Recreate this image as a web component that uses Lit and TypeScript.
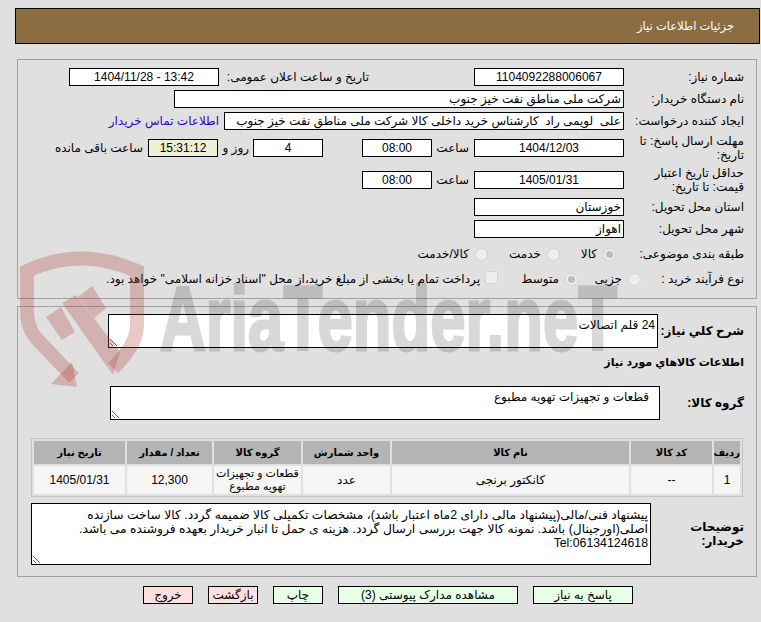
import { LitElement, html, css } from "lit";
import { customElement } from "lit/decorators.js";

const ROWS = [
  { n: "1", code: "--", name: "کانکتور برنجی", unit: "عدد", group: "قطعات و تجهیزات تهویه مطبوع", qty: "12,300", date: "1405/01/31" },
];

@customElement("app-root")
export class AppRoot extends LitElement {
  static styles = css`
    :host {
      display: block;
      position: relative;
      width: 761px;
      height: 622px;
      overflow: hidden;
      background: #e0e0e0;
      font-family: "Liberation Sans", "DejaVu Sans", sans-serif;
      font-size: 12px;
      line-height: 14px;
      color: #000;
      direction: rtl;
    }
    * { box-sizing: border-box; }
    .header {
      margin: 8px 1px 0 15px;
      height: 36px;
      background: #8c6d42;
      border: 1px solid #000;
      color: #fff;
      font-size: 11.5px;
      display: flex;
      align-items: center;
      padding-right: 25px;
    }
    .panel {
      border: 1px solid #a0a0a0;
      margin: 15px 4px 0 17px;
    }
    .top {
      height: 240px;
      padding: 8px 12px 0 0;
      display: flex;
      flex-direction: column;
      gap: 4px;
    }
    .bottom {
      margin-top: 7px;
      height: 271px;
      padding: 7px 12px 0 0;
    }
    .row { display: flex; align-items: center; height: 18px; flex: none; }
    .row.tall { height: 28px; }
    .label { width: 108px; margin-left: 12px; flex: none; white-space: nowrap; }
    .tall .label { white-space: normal; }
    .box {
      width: 150px;
      height: 18px;
      flex: none;
      background: #fff;
      border: 1px solid #000;
      display: flex;
      align-items: center;
      justify-content: center;
      white-space: pre;
      overflow: hidden;
      padding: 0 2px;
    }
    .box.start { justify-content: flex-start; }
    .box.wide { width: 450px; }
    .box.wider { width: 400px; }
    .box.short { width: 70px; }
    .box.clock { background: #efefd5; }
    .label2 { width: 150px; margin-right: 105px; padding-left: 5px; flex: none; white-space: nowrap; }
    .link { color: #3300cc; margin-right: 5px; white-space: nowrap; }
    .hour { width: 37px; margin-right: 5px; flex: none; }
    .days { margin-right: 39px; }
    .rooz { width: 35px; flex: none; padding-right: 4px; }
    .remain { margin-right: 5px; white-space: nowrap; }
    .radios { margin-top: 3px; }
    .opt { display: flex; align-items: center; gap: 3px; flex: none; white-space: nowrap; }
    .w56 { width: 56px; }
    .w72 { width: 72px; }
    .w63 { width: 63px; }
    .w80 { width: 80px; }
    .lab8 { width: 108px; margin-left: 20px; flex: none; white-space: nowrap; }
    .lab9 { width: 103px; flex: none; white-space: nowrap; }
    .radio {
      width: 13px;
      height: 13px;
      border-radius: 50%;
      border: 1px solid #d2d2d2;
      background: #eeeeee;
      flex: none;
      margin-left: 3px;
      display: flex;
      align-items: center;
      justify-content: center;
    }
    .radio.on::after {
      content: "";
      width: 7px;
      height: 7px;
      border-radius: 50%;
      background: #bcbcbc;
    }
    .check {
      width: 13px;
      height: 13px;
      border-radius: 2px;
      border: 1px solid #d2d2d2;
      background: #eeeeee;
      flex: none;
      margin-left: 2px;
      margin-top: -3px;
    }
    textarea {
      display: block;
      flex: none;
      background: #fff;
      border: 1px solid #000;
      border-radius: 0;
      margin: 0;
      padding: 3px 2px 2px;
      font: inherit;
      color: #000;
      direction: rtl;
      overflow: hidden;
      outline: none;
    }
    .b { font-weight: bold; }
    .flow { display: flex; align-items: center; }
    .sharh { width: 86px; flex: none; white-space: nowrap; }
    .sharh-t { width: 550px; height: 34px; }
    .heading { margin-top: 7px; font-size: 11px; }
    .grp { margin-top: 17px; }
    .grp-l { width: 84px; flex: none; white-space: nowrap; }
    .grp-t { width: 550px; height: 34px; padding: 3px 10px 2px; }
    table {
      margin: 18px 1px 0 0;
      width: 712px;
      table-layout: fixed;
      border: 1px solid #c4c4c4;
      border-spacing: 2px;
      border-collapse: separate;
    }
    th { background: #b4b4b4; height: 23px; padding: 0; font-weight: bold; font-size: 10px; text-align: center; white-space: nowrap; }
    td { background: #f5f5f5; height: 28px; padding: 0; text-align: center; }
    td.tight { font-size: 11px; line-height: 13px; }
    .desc { margin-top: 6px; }
    .desc-l { width: 93px; flex: none; padding-left: 20px; }
    .desc-t { width: 620px; height: 62px; font-size: 12.3px; padding-top: 4px; }
    .buttons {
      display: flex;
      gap: 15px;
      margin-top: 9px;
      padding-right: 128px;
    }
    .btn {
      height: 18px;
      border: 1px solid #000;
      display: flex;
      align-items: center;
      justify-content: center;
      background: #e8ffe8;
      white-space: nowrap;
      flex: none;
    }
    .btn.red { background: #ffe0e0; }
    .w100 { width: 100px; }
    .w180 { width: 180px; }
    .w50 { width: 50px; }
    .mark { position: absolute; left: 0; top: 0; pointer-events: none; direction: ltr; }
    .mark text { font-family: "Liberation Sans", sans-serif; font-weight: bold; }
    .c1 { width: 26px; } .c2 { width: 81px; } .c3 { width: 237px; } .c4 { width: 87px; }
    .c5 { width: 87px; } .c6 { width: 85px; } .c7 { width: 91px; }
  `;

  private hours(v: string) {
    return html`<div class="hour">ساعت</div><div class="box short">${v}</div>`;
  }

  render() {
    return html`
      <div class="header">جزئیات اطلاعات نیاز</div>
      <div class="panel top">
        <div class="row">
          <div class="label">شماره نیاز:</div>
          <div class="box">1104092288006067</div>
          <div class="label2">تاریخ و ساعت اعلان عمومی:</div>
          <div class="box"><bdi>1404/11/28 - 13:42</bdi></div>
        </div>
        <div class="row">
          <div class="label">نام دستگاه خریدار:</div>
          <div class="box wide start">شرکت ملی مناطق نفت خیز جنوب</div>
        </div>
        <div class="row">
          <div class="label">ایجاد کننده درخواست:</div>
          <div class="box wider start">علی  لویمی راد  کارشناس خرید داخلی کالا شرکت ملی مناطق نفت خیز جنوب</div>
          <div class="link">اطلاعات تماس خریدار</div>
        </div>
        <div class="row tall">
          <div class="label">مهلت ارسال پاسخ: تا تاریخ:</div>
          <div class="box">1404/12/03</div>
          ${this.hours("08:00")}
          <div class="box short days">4</div>
          <div class="rooz">روز و</div>
          <div class="box short clock">15:31:12</div>
          <div class="remain">ساعت باقی مانده</div>
        </div>
        <div class="row tall">
          <div class="label">حداقل تاریخ اعتبار قیمت: تا تاریخ:</div>
          <div class="box">1405/01/31</div>
          ${this.hours("08:00")}
        </div>
        <div class="row">
          <div class="label">استان محل تحویل:</div>
          <div class="box start">خوزستان</div>
        </div>
        <div class="row">
          <div class="label">شهر محل تحویل:</div>
          <div class="box start">اهواز</div>
        </div>
        <div class="row radios">
          <div class="lab8">طبقه بندی موضوعی:</div>
          <div class="opt w56"><span class="radio on"></span>کالا</div>
          <div class="opt w72"><span class="radio"></span>خدمت</div>
          <div class="opt"><span class="radio"></span>کالا/خدمت</div>
        </div>
        <div class="row radios">
          <div class="lab9">نوع فرآیند خرید :</div>
          <div class="opt w63"><span class="radio"></span>جزیی</div>
          <div class="opt w80"><span class="radio on"></span>متوسط</div>
          <div class="opt"><span class="check"></span>پرداخت تمام یا بخشی از مبلغ خرید،از محل "اسناد خزانه اسلامی" خواهد بود.</div>
        </div>
      </div>
      <div class="panel bottom">
        <div class="flow">
          <div class="sharh b">شرح كلي نياز:</div>
          <textarea class="sharh-t" readonly>24 قلم اتصالات</textarea>
        </div>
        <div class="heading b">اطلاعات كالاهاي مورد نياز</div>
        <div class="flow grp">
          <div class="grp-l b">گروه کالا:</div>
          <textarea class="grp-t" readonly>قطعات و تجهیزات تهویه مطبوع</textarea>
        </div>
        <table>
          <colgroup>
            <col class="c1" /><col class="c2" /><col class="c3" /><col class="c4" />
            <col class="c5" /><col class="c6" /><col class="c7" />
          </colgroup>
          <thead>
            <tr>
              <th>رديف</th><th>کد کالا</th><th>نام کالا</th><th>واحد شمارش</th>
              <th>گروه کالا</th><th>تعداد / مقدار</th><th>تاریخ نیاز</th>
            </tr>
          </thead>
          <tbody>
            ${ROWS.map(
              (r) => html`<tr>
                <td>${r.n}</td><td>${r.code}</td><td>${r.name}</td><td>${r.unit}</td>
                <td class="tight">${r.group}</td><td>${r.qty}</td><td>${r.date}</td>
              </tr>`
            )}
          </tbody>
        </table>
        <div class="flow desc">
          <div class="desc-l b">توضیحات خریدار:</div>
          <textarea class="desc-t" readonly>پیشنهاد فنی/مالی(پیشنهاد مالی دارای 2ماه اعتبار باشد)، مشخصات تکمیلی کالا ضمیمه گردد. کالا ساخت سازنده اصلی(اورجینال) باشد. نمونه کالا جهت بررسی ارسال گردد. هزینه ی حمل تا انبار خریدار بعهده فروشنده می باشد. Tel:06134124618</textarea>
        </div>
      </div>
      <div class="buttons">
        <div class="btn w100">پاسخ به نیاز</div>
        <div class="btn w180">مشاهده مدارک پیوستی (3)</div>
        <div class="btn w50">چاپ</div>
        <div class="btn w50 red">بازگشت</div>
        <div class="btn w50 red">خروج</div>
      </div>
      <svg class="mark" width="761" height="622" viewBox="0 0 761 622">
        <g fill="#b03a3a" fill-opacity=".28">
          <path fill="none" stroke="#b03a3a" stroke-opacity=".28" stroke-width="14"
            d="M74 378 L36 338 Q27 328 27 310 L27 271 Q80 246 137 271 L137 325 Q137 345 113 368" />
          <polygon points="51,384 77,387 72,362" />
          <polygon points="46,317 61,307 75,332 62,340" />
          <polygon points="78,297 92,286 106,308 94,318" />
          <polygon points="62,303 76,295 120,352 113,375" />
        </g>
        <g opacity=".15">
          <text x="160" y="350" font-size="90" textLength="457" lengthAdjust="spacingAndGlyphs" fill="#000" stroke="#000" stroke-width="3">AriaTender.neT</text>
        </g>
      </svg>
    `;
  }
}
